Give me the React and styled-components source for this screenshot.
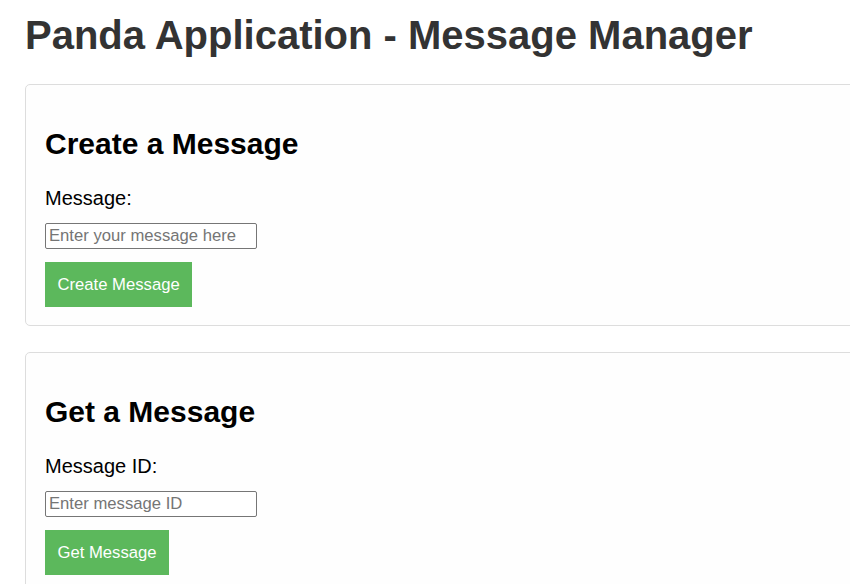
import React from "react";
import styled, { createGlobalStyle } from "styled-components";

const Global = createGlobalStyle`
  html, body { margin: 0; padding: 0; background: #fff; overflow: hidden; }
  body { font-family: "Liberation Sans", Arial, sans-serif; }
`;

const Page = styled.div`
  padding: 12px 0 0 25px;
  width: 1000px;
`;

const Title = styled.h1`
  margin: 0 0 26px;
  font-size: 40px;
  line-height: 46px;
  font-weight: bold;
  color: #333;
`;

const Card = styled.section`
  background: #fefefe;
  border: 1px solid #ddd;
  border-radius: 5px;
  padding: 18px 19px 18px;
  margin-bottom: 26px;
`;

const CardTitle = styled.h2`
  margin: 24px 0 26px;
  font-size: 30px;
  line-height: 34px;
  font-weight: bold;
  color: #000;
`;

const Label = styled.label`
  display: block;
  font-size: 20px;
  line-height: 23px;
  color: #000;
  margin-bottom: 13px;
`;

const Input = styled.input`
  display: block;
  box-sizing: border-box;
  width: 212px;
  height: 26px;
  padding: 1px 3px;
  border: 1px solid #767676;
  border-radius: 2px;
  font-family: "Liberation Sans", Arial, sans-serif;
  font-size: 16.67px;
  color: #000;
  background: #fff;
  margin-bottom: 13px;
  &::placeholder { color: #757575; }
`;

const Button = styled.button`
  display: block;
  border: none;
  background: #5cb85c;
  color: #fff;
  font-family: "Liberation Sans", Arial, sans-serif;
  font-size: 16.67px;
  line-height: 19px;
  padding: 13px 12.5px;
  border-radius: 0;
  cursor: pointer;
`;

function Section({ title, label, placeholder, button, id }) {
  return (
    <Card>
      <CardTitle>{title}</CardTitle>
      <Label htmlFor={id}>{label}</Label>
      <Input id={id} type="text" placeholder={placeholder} />
      <Button>{button}</Button>
    </Card>
  );
}

export default function App() {
  return (
    <>
      <Global />
      <Page>
        <Title>Panda Application - Message Manager</Title>
        <Section
          id="msg"
          title="Create a Message"
          label="Message:"
          placeholder="Enter your message here"
          button="Create Message"
        />
        <Section
          id="mid"
          title="Get a Message"
          label="Message ID:"
          placeholder="Enter message ID"
          button="Get Message"
        />
      </Page>
    </>
  );
}
